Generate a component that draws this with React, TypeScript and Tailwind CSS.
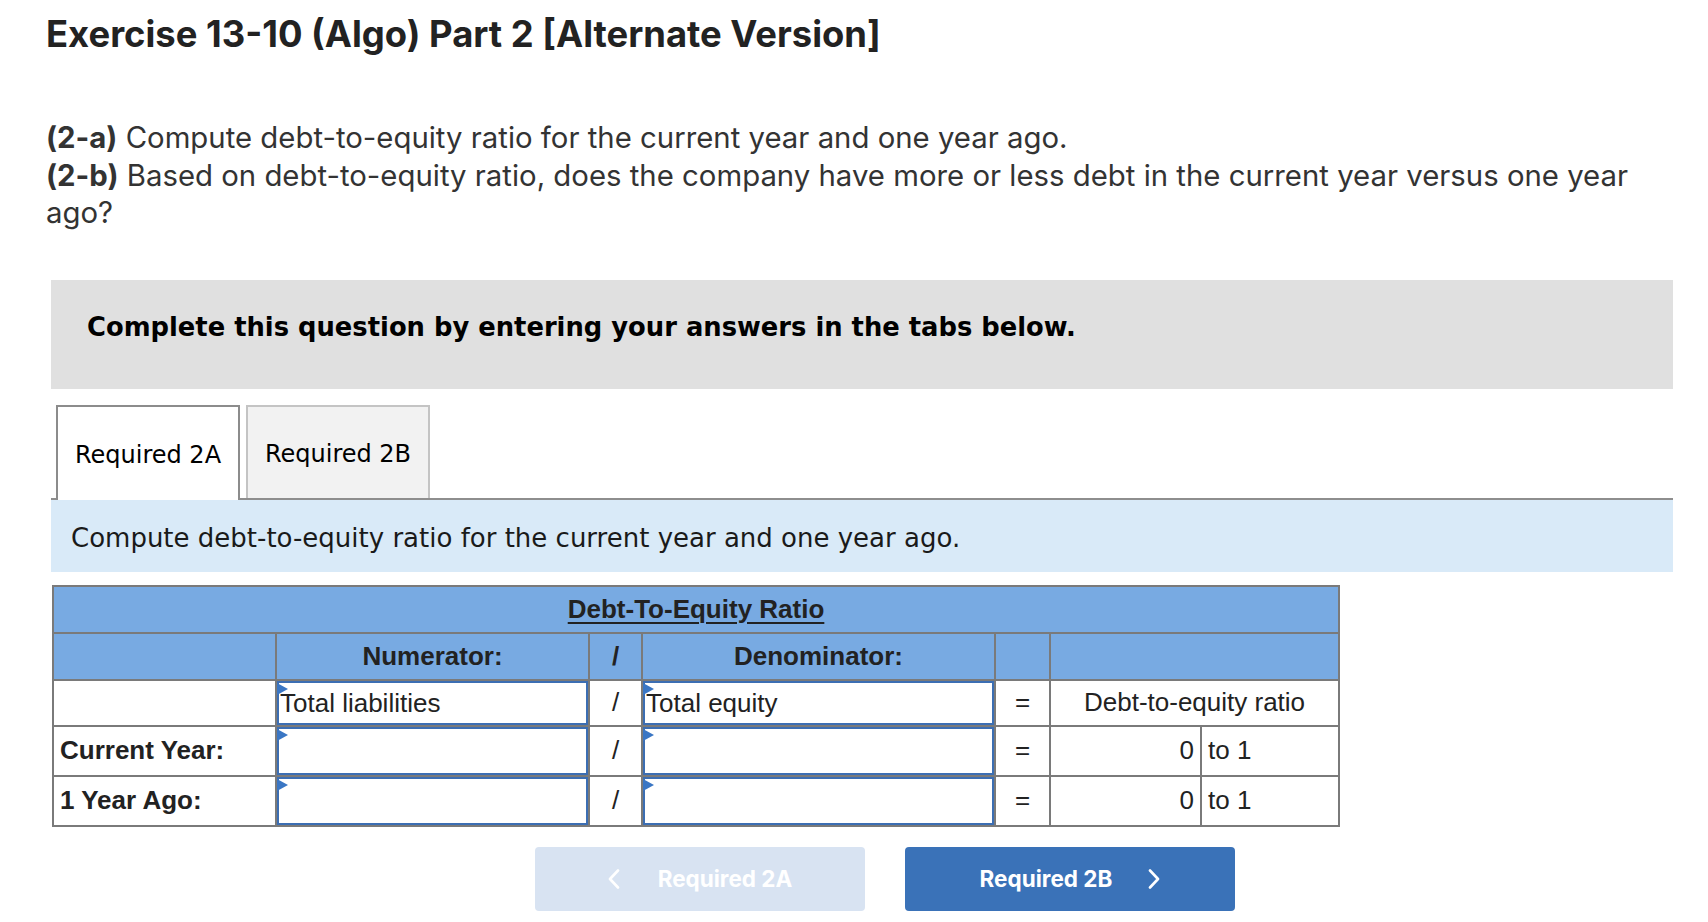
const COL_WIDTHS = ["w-[223px]", "w-[313px]", "w-[53px]", "w-[353px]", "w-[55px]", "w-[151px]", "w-[138px]"];

const ROWS = [
  { label: "Current Year:", value: "0" },
  { label: "1 Year Ago:", value: "0" },
];

function AnswerBox({ text, tall }: { text?: string; tall?: boolean }) {
  return (
    <div
      className={
        "relative flex items-center border-2 border-[#3c6eb3] bg-white pl-[1px] " +
        (tall ? "h-[48px]" : "h-[44px]")
      }
    >
      <span className="absolute -left-[2px] top-[0px] h-0 w-0 border-y-[6px] border-l-[11px] border-y-transparent border-l-[#3a76c4]" />
      {text && <span className="leading-none">{text}</span>}
    </div>
  );
}

function Chevron({ dir }: { dir: "left" | "right" }) {
  return (
    <svg width="12" height="20" viewBox="0 0 12 20" fill="none" className="shrink-0">
      <path
        d={dir === "left" ? "M10 1.5 L2 10 L10 18.5" : "M2 1.5 L10 10 L2 18.5"}
        stroke="white"
        strokeWidth="2.6"
        strokeLinecap="round"
        strokeLinejoin="round"
      />
    </svg>
  );
}

export default function App() {
  const cell = "border-2 border-[#7a7a7a]";

  return (
    <div className="min-h-[922px] w-[1708px] bg-white">
      <div className="pl-[46px] pt-[12px] font-['Inter',sans-serif]">
        <h1 className="text-[36.4px] font-bold leading-[44px] text-[#222]">
          Exercise 13-10 (Algo) Part 2 [Alternate Version]
        </h1>
        <div className="mt-[63px] w-[1640px] text-[29.35px] leading-[37.5px] text-[#333]">
          <p>
            <b className="font-bold">(2-a)</b> Compute debt-to-equity ratio for the current year and one year ago.
          </p>
          <p>
            <b className="font-bold">(2-b)</b> Based on debt-to-equity ratio, does the company have more or less debt in
            the current year versus one year
            <br />
            ago?
          </p>
        </div>
      </div>

      <div className="ml-[51px] mt-[48px] w-[1622px]">
        <div className="h-[109px] bg-[#e0e0e0] pl-[36px] pt-[31px] font-['DejaVu_Sans',Verdana,sans-serif] text-[25.8px] font-bold leading-[32px] text-black">
          Complete this question by entering your answers in the tabs below.
        </div>

        <div className="mt-[16px] flex items-start gap-[6px] border-b-2 border-[#8e8e8e] pl-[5px] font-['DejaVu_Sans',Verdana,sans-serif] text-[24px] text-black">
          <div className="-mb-[2px] flex h-[95px] w-[184px] items-center justify-center border-2 border-b-0 border-[#8c8c8c] bg-white pt-[3px]">
            Required 2A
          </div>
          <div className="flex h-[93px] w-[184px] items-center justify-center border-2 border-b-0 border-[#c4c4c4] bg-[#f2f2f2] pt-[4px]">
            Required 2B
          </div>
        </div>

        <div className="h-[72px] bg-[#d9eaf8] pl-[20px] pt-[22px] font-['DejaVu_Sans',Verdana,sans-serif] text-[26px] leading-[32px] text-[#1a1a1a]">
          Compute debt-to-equity ratio for the current year and one year ago.
        </div>

        <table className="ml-[1px] mt-[13px] w-[1286px] table-fixed border-collapse font-['Liberation_Sans',Arial,sans-serif] text-[26px] text-[#222]">
          <colgroup>
            {COL_WIDTHS.map((w, i) => (
              <col key={i} className={w} />
            ))}
          </colgroup>
          <tbody>
            <tr className="h-[47px] bg-[#78aae2]">
              <td colSpan={7} className={cell + " text-center font-bold"}>
                <span className="underline decoration-[2px] underline-offset-[4px]">Debt-To-Equity Ratio</span>
              </td>
            </tr>
            <tr className="h-[47px] bg-[#78aae2] font-bold">
              <td className={cell} />
              <td className={cell + " text-center"}>Numerator:</td>
              <td className={cell + " text-center"}>/</td>
              <td className={cell + " text-center"}>Denominator:</td>
              <td className={cell} />
              <td colSpan={2} className={cell} />
            </tr>
            <tr className="h-[46px] bg-white">
              <td className={cell} />
              <td className={cell + " p-0"}>
                <AnswerBox text="Total liabilities" />
              </td>
              <td className={cell + " text-center"}>/</td>
              <td className={cell + " p-0"}>
                <AnswerBox text="Total equity" />
              </td>
              <td className={cell + " text-center"}>=</td>
              <td colSpan={2} className={cell + " text-center"}>
                Debt-to-equity ratio
              </td>
            </tr>
            {ROWS.map((r) => (
              <tr key={r.label} className="h-[50px] bg-white">
                <td className={cell + " pl-[6px] font-bold"}>{r.label}</td>
                <td className={cell + " p-0"}>
                  <AnswerBox tall />
                </td>
                <td className={cell + " text-center"}>/</td>
                <td className={cell + " p-0"}>
                  <AnswerBox tall />
                </td>
                <td className={cell + " text-center"}>=</td>
                <td className={cell + " pr-[6px] text-right"}>{r.value}</td>
                <td className={cell + " pl-[6px]"}>to 1</td>
              </tr>
            ))}
          </tbody>
        </table>

        <div className="ml-[484px] mt-[20px] flex gap-[40px] font-['Inter',sans-serif] text-[22.5px] font-bold text-white">
          <button className="flex h-[64px] w-[330px] items-center justify-center gap-[38px] rounded-[4px] bg-[#d8e3f2]">
            <Chevron dir="left" />
            <span>Required 2A</span>
          </button>
          <button className="flex h-[64px] w-[330px] items-center justify-center gap-[36px] rounded-[4px] bg-[#3a72b8]">
            <span>Required 2B</span>
            <Chevron dir="right" />
          </button>
        </div>
      </div>
    </div>
  );
}
